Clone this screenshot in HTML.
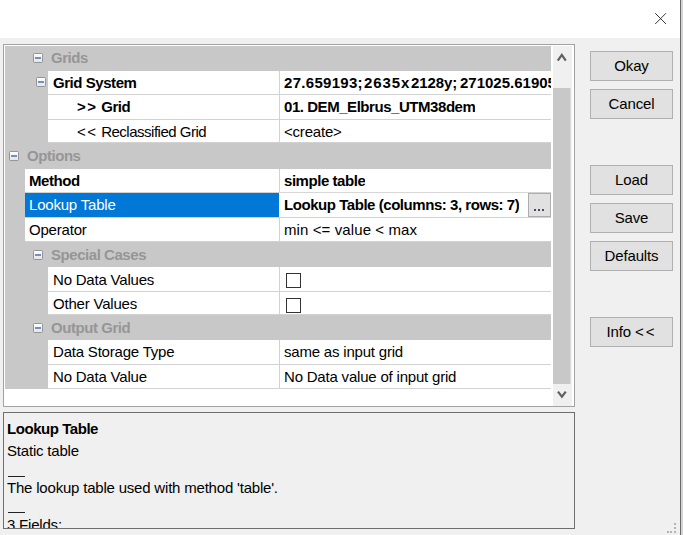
<!DOCTYPE html>
<html><head><meta charset="utf-8">
<style>
*{box-sizing:border-box;margin:0;padding:0}
html,body{width:683px;height:535px;overflow:hidden;background:#f0f0f0;font-family:"Liberation Sans",sans-serif;font-size:15px;letter-spacing:-0.2px;color:#000}
.a{position:absolute}
.t{position:absolute;white-space:pre;line-height:16px}
.b{font-weight:bold;letter-spacing:-0.45px}
.cat{color:#969696;font-weight:bold;letter-spacing:-0.45px}
.rw{background:#fff;border-bottom:1px solid #d2d2d2}
.vl{width:1px;background:#d2d2d2}
.v{max-width:266px;overflow:hidden}
.mn{position:absolute;width:10px;height:10px;border:1px solid #959595;border-radius:1.5px;background:linear-gradient(#fdfdfd,#e6e6e6)}
.mn:after{content:"";position:absolute;left:1px;top:3px;width:6px;height:2px;background:#7590c0}
.chk{width:15px;height:15px;border:1px solid #333;background:#fff}
.ell{width:23px;height:24px;background:#e1e1e1;border:1px solid #adadad}
.ell i{position:absolute;top:15px;width:2px;height:2px;background:#4a4a66}
#title{left:0;top:0;width:680px;height:38px;background:#fff}
#rborder{left:680px;top:0;width:1px;height:535px;background:#6a6a6a}
#rbehind{left:681px;top:0;width:2px;height:535px;background:#d4d4d4}
#lb{left:3px;top:44px;width:572px;height:363px;border:1px solid #a2a2a6;background:#fff}
#margin{left:5px;top:46px;width:546px;height:343px;background:#c8c8c8}
#sb{left:553px;top:46px;width:19px;height:360px;background:#f0f0f0}
#thumb{left:553px;top:88px;width:17px;height:296px;background:#c8c8c8;box-shadow:1px 0 0 #dcdcdc}
.btn{position:absolute;left:590px;width:83px;height:30px;background:#e1e1e1;border:1px solid #b0b0b0;text-align:center;line-height:28px;font-size:15px;letter-spacing:-0.15px}
#info{left:3px;top:412px;width:572px;height:117px;border:1px solid #6e6e6e;background:#f0f0f0;overflow:hidden}
#info .l{position:absolute;left:3px;white-space:pre;line-height:16px}
</style></head><body>
<div id="title" class="a"></div>

<svg class="a" style="left:654px;top:12px" width="14" height="14" viewBox="0 0 14 14"><path d="M1.2 1.2 L12 12 M12 1.2 L1.2 12" stroke="#222" stroke-width="0.9" fill="none"/></svg>
<div id="rborder" class="a"></div>
<div id="rbehind" class="a"></div>

<div id="lb" class="a"></div>
<div id="margin" class="a"></div>
<div class="a" style="left:5px;top:46px;width:546px;height:343px;overflow:hidden">
<div class="a" style="left:-5px;top:-46px;width:683px;height:535px">
<div class="mn" style="left:33px;top:53px"></div>
<span class="t cat" style="left:51px;top:50px">Grids</span>
<div class="a rw" style="left:48px;top:71px;width:503px;height:24px"></div>
<div class="a vl" style="left:279px;top:71px;height:24px"></div>
<span class="t b" style="left:53px;top:75px">Grid System</span>
<span class="t b" style="left:284px;top:75px;letter-spacing:0.3px">27.659193;</span>
<span class="t b" style="left:364px;top:75px;letter-spacing:0.9px">2635x</span>
<span class="t b" style="left:411px;top:75px;letter-spacing:-0.1px">2128y;</span>
<span class="t b" style="left:460px;top:75px;letter-spacing:0.0px">271025.61905</span>
<div class="mn" style="left:36px;top:77px"></div>
<div class="a rw" style="left:48px;top:95px;width:503px;height:25px"></div>
<div class="a vl" style="left:279px;top:95px;height:25px"></div>
<span class="t b" style="left:77px;top:99px"><span style="letter-spacing:1.5px">&gt;&gt;</span> Grid</span>
<span class="t b v" style="left:284px;top:99px">01. DEM_Elbrus_UTM38dem</span>
<div class="a rw" style="left:48px;top:120px;width:503px;height:23px"></div>
<div class="a vl" style="left:279px;top:120px;height:23px"></div>
<span class="t" style="left:77px;top:124px"><span style="letter-spacing:1.5px">&lt;&lt;</span><span style="letter-spacing:-0.5px"> Reclassified Grid</span></span>
<span class="t v" style="left:284px;top:124px">&lt;create&gt;</span>
<div class="mn" style="left:9px;top:151px"></div>
<span class="t cat" style="left:27px;top:148px">Options</span>
<div class="a rw" style="left:25px;top:169px;width:526px;height:24px"></div>
<div class="a vl" style="left:279px;top:169px;height:24px"></div>
<span class="t b" style="left:29px;top:173px">Method</span>
<span class="t b v" style="left:284px;top:173px">simple table</span>
<div class="a rw" style="left:25px;top:193px;width:526px;height:25px"></div>
<div class="a" style="left:25px;top:193px;width:254px;height:24px;background:#0078d7"></div>
<span class="t" style="left:29px;top:197px;color:#fff">Lookup Table</span>
<span class="t b v" style="left:284px;top:197px">Lookup Table (columns: 3, rows: 7)</span>
<div class="a" style="left:279px;top:192px;width:249px;height:1px;background:#d7d7d7"></div>
<div class="a" style="left:279px;top:193px;width:1px;height:24px;background:#fff"></div>
<div class="a ell" style="left:528px;top:193px"><i style="left:5px"></i><i style="left:9px"></i><i style="left:13px"></i></div>
<div class="a rw" style="left:25px;top:218px;width:526px;height:24px"></div>
<div class="a vl" style="left:279px;top:218px;height:24px"></div>
<span class="t" style="left:29px;top:222px">Operator</span>
<span class="t v" style="left:284px;top:222px;letter-spacing:0.1px">min &lt;= value &lt; max</span>
<div class="mn" style="left:33px;top:250px"></div>
<span class="t cat" style="left:51px;top:247px">Special Cases</span>
<div class="a rw" style="left:48px;top:267px;width:503px;height:25px"></div>
<div class="a vl" style="left:279px;top:267px;height:25px"></div>
<span class="t" style="left:53px;top:272px">No Data Values</span>
<div class="a chk" style="left:286px;top:273px"></div>
<div class="a rw" style="left:48px;top:292px;width:503px;height:23px"></div>
<div class="a vl" style="left:279px;top:292px;height:23px"></div>
<span class="t" style="left:53px;top:296px">Other Values</span>
<div class="a chk" style="left:286px;top:298px"></div>
<div class="mn" style="left:33px;top:323px"></div>
<span class="t cat" style="left:51px;top:320px">Output Grid</span>
<div class="a rw" style="left:48px;top:340px;width:503px;height:25px"></div>
<div class="a vl" style="left:279px;top:340px;height:25px"></div>
<span class="t" style="left:53px;top:344px">Data Storage Type</span>
<span class="t v" style="left:284px;top:344px">same as input grid</span>
<div class="a rw" style="left:48px;top:365px;width:503px;height:24px"></div>
<div class="a vl" style="left:279px;top:365px;height:24px"></div>
<span class="t" style="left:53px;top:369px">No Data Value</span>
<span class="t v" style="left:284px;top:369px">No Data value of input grid</span>
</div></div>
<div id="sb" class="a"></div>
<div id="thumb" class="a"></div>
<svg class="a" style="left:553px;top:46px" width="19" height="20"><path d="M4.8 14.6 L8.8 8.9 L12.8 14.6" stroke="#606060" stroke-width="2.2" fill="none"/></svg>
<svg class="a" style="left:553px;top:384px" width="19" height="22"><path d="M5 7.6 L8.9 12.6 L12.8 7.6" stroke="#606060" stroke-width="2.2" fill="none"/></svg>

<div class="btn" style="top:51px">Okay</div>
<div class="btn" style="top:89px">Cancel</div>
<div class="btn" style="top:165px">Load</div>
<div class="btn" style="top:203px">Save</div>
<div class="btn" style="top:241px">Defaults</div>
<div class="btn" style="top:317px">Info <span style="letter-spacing:2px">&lt;&lt;</span></div>

<div class="a" style="left:674px;top:523px;width:2px;height:2px;background:#b4b4b4"></div><div class="a" style="left:674px;top:527px;width:2px;height:2px;background:#b4b4b4"></div><div class="a" style="left:674px;top:531px;width:2px;height:2px;background:#b4b4b4"></div><div class="a" style="left:670px;top:531px;width:2px;height:2px;background:#b4b4b4"></div><div class="a" style="left:667px;top:531px;width:2px;height:2px;background:#b4b4b4"></div>
<div id="info" class="a">
  <span class="l b" style="top:8px">Lookup Table</span>
  <span class="l" style="top:30px">Static table</span>
  <div class="a" style="left:4px;top:63px;width:17px;height:1px;background:#222"></div>
  <span class="l" style="top:67px">The lookup table used with method 'table'.</span>
  <div class="a" style="left:4px;top:99px;width:17px;height:1px;background:#222"></div>
  <span class="l" style="top:104px">3 Fields:</span>
</div>
</body></html>
